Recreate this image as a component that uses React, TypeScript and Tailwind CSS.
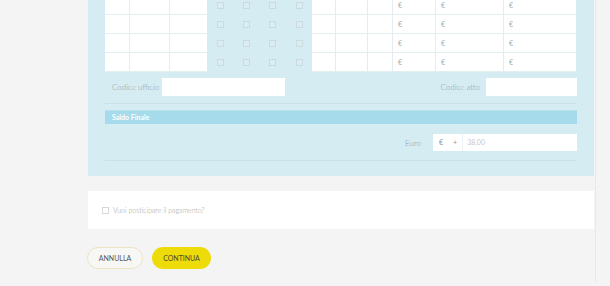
import React from "react";

const cols = "grid-cols-[25px_40px_37px_26px_26px_27px_26px_24px_32px_25px_43px_68px_72px]";

function Box() {
  return <span className="block w-[7px] h-[7px] border border-[#cbdade] bg-[#d9edf3]" />;
}

function Row({ first }: { first?: boolean }) {
  const white = "bg-white border-r border-b border-[#e4edf0]";
  return (
    <div className={`grid ${cols} h-[19px] ${first ? "-mt-[4px]" : ""}`}>
      <div className={white} />
      <div className={white} />
      <div className={`${white} border-r-0`} />
      {[0, 1, 2, 3].map((i) => (
        <div key={i} className="flex items-center justify-center">
          <Box />
        </div>
      ))}
      <div className={white} />
      <div className={white} />
      <div className={white} />
      {[0, 1, 2].map((i) => (
        <div key={i} className={`${white} ${i === 2 ? "border-r-0" : ""} flex items-center pl-[5px] text-[7px] text-[#a3adb0]`}>
          €
        </div>
      ))}
    </div>
  );
}

export default function App() {
  return (
    <div className="h-[286px] w-[610px] overflow-hidden bg-[#f4f4f4] font-['Lato',sans-serif]">
      <div className="ml-[88px] w-[508px] h-full border-r border-[#e9e9e9] pr-px">
        <div className="bg-[#d6ecf3] px-[17px] pb-[15px]">
          <div className="w-[471px]">
            <Row first />
            <Row />
            <Row />
            <Row />
          </div>

          <div className="flex items-center justify-between mt-[6px] pb-[7px] border-b border-[#c8e0e8]">
            <div className="flex items-center pl-[7px]">
              <span className="text-[8px] font-light text-[#8f9a9e] mr-[3px]">Codice ufficio</span>
              <div className="w-[123px] h-[18px] bg-white" />
            </div>
            <div className="flex items-center">
              <span className="text-[8px] font-light text-[#8f9a9e] mr-[6px]">Codice atto</span>
              <div className="w-[91px] h-[18px] bg-white" />
            </div>
          </div>

          <div className="mt-[6px] h-[14px] bg-[#a5dbea] flex items-center pl-[7px] border-t border-[#b5e2ee]">
            <span className="text-[7px] font-bold text-white">Saldo Finale</span>
          </div>

          <div className="flex items-center justify-end mt-[10px] pb-[9px] border-b border-[#c8e0e8]">
            <span className="text-[8px] font-light text-[#8f9a9e] mr-[12px]">Euro</span>
            <div className="w-[144px] h-[17px] bg-white flex items-center text-[7px]">
              <span className="ml-[6px] text-[#8a9599]">€</span>
              <span className="ml-[10px] text-[#8a9599]">+</span>
              <span className="ml-[5px] h-full w-px bg-[#edf2f4]" />
              <span className="ml-[4px] text-[#c7c7c7]">38,00</span>
            </div>
          </div>
        </div>

        <div className="mt-[15px] h-[38px] bg-white flex items-center pl-[14px]">
          <span className="block w-[7px] h-[7px] border border-[#d8d8d8] bg-white" />
          <span className="ml-[4px] text-[7px] font-light text-[#a0a0a0]">Vuoi posticipare il pagamento?</span>
        </div>

        <div className="flex items-center gap-[9px] mt-[18px] -ml-px">
          <button className="w-[56px] h-[22px] rounded-full border border-[#eee4c2] bg-[#f7f7f5] text-[7px] text-[#555]">
            ANNULLA
          </button>
          <button className="w-[59px] h-[22px] rounded-full bg-[#eedb0a] text-[7px] text-[#4a4a2a]">
            CONTINUA
          </button>
        </div>
      </div>
    </div>
  );
}
